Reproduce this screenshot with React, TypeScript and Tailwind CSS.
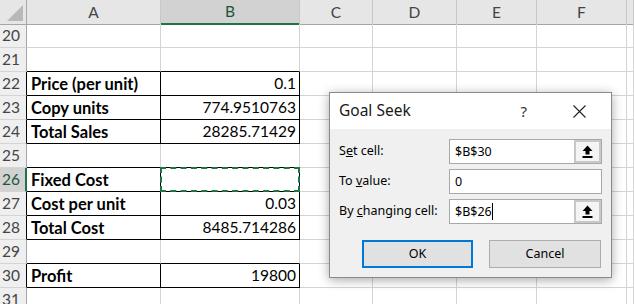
import React from "react"

type Row = { n: number; a?: string; b?: string; box?: boolean; above?: boolean; sel?: boolean }

const rows: Row[] = [
    { n: 20 },
    { n: 21, above: true },
    { n: 22, a: "Price (per unit)", b: "0.1", box: true },
    { n: 23, a: "Copy units", b: "774.9510763", box: true },
    { n: 24, a: "Total Sales", b: "28285.71429", box: true },
    { n: 25, above: true },
    { n: 26, a: "Fixed Cost", box: true, sel: true },
    { n: 27, a: "Cost per unit", b: "0.03", box: true },
    { n: 28, a: "Total Cost", b: "8485.714286", box: true },
    { n: 29, above: true },
    { n: 30, a: "Profit", b: "19800", box: true },
    { n: 31 },
]

const cols = ["C", "D", "E", "F", ""]

function RefButton() {
    return (
        <div className="w-[27px] h-full border-2 border-[#c8c8c8] bg-[#f4f4f4] flex items-center justify-center">
            <svg width="11" height="13" viewBox="0 0 11 13">
                <path d="M5.5 0.5 L10.5 6 L7.5 6 L7.5 9.5 L3.5 9.5 L3.5 6 L0.5 6 Z" fill="#000" />
                <rect x="0.5" y="11" width="10" height="2" fill="#000" />
            </svg>
        </div>
    )
}

function GoalSeek() {
    return (
        <div className="absolute left-[329px] top-[92px] w-[283px] h-[186px] bg-[#f0f0f0] border border-[#8a8a8a] shadow-[0_2px_10px_rgba(0,0,0,0.35)] font-['Noto_Sans',sans-serif] text-[#000]">
            {/* title bar */}
            <div className="h-[36px] bg-white flex items-center pl-[9px] pr-[16px]">
                <span className="text-[15.5px] text-[#1a1a1a]">Goal Seek</span>
                <span className="ml-auto text-[15px] text-[#333] mr-[46px]">?</span>
                <svg width="13" height="13" viewBox="0 0 13 13" className="mr-[9px]">
                    <path d="M0.5 0.5 L12.5 12.5 M12.5 0.5 L0.5 12.5" stroke="#222" strokeWidth="1.1" />
                </svg>
            </div>

            {/* fields */}
            <div className="pt-[10px] pl-[9px] pr-[9px] flex flex-col gap-[5px] text-[12.5px]">
                <div className="flex items-center h-[25px]">
                    <span className="w-[110px]">S<u>e</u>t cell:</span>
                    <div className="flex-1 h-full flex border border-[#a8a8a8] bg-white">
                        <span className="flex-1 pl-[5px] leading-[23px]">$B$30</span>
                        <RefButton />
                    </div>
                </div>
                <div className="flex items-center h-[25px]">
                    <span className="w-[110px]">To <u>v</u>alue:</span>
                    <div className="flex-1 h-full border border-[#a8a8a8] bg-white pl-[5px] leading-[23px]">0</div>
                </div>
                <div className="flex items-center h-[25px]">
                    <span className="w-[110px]">By <u>c</u>hanging cell:</span>
                    <div className="flex-1 h-full flex border border-[#a8a8a8] bg-white">
                        <span className="flex-1 pl-[5px] leading-[23px] flex items-center">
                            $B$26<span className="inline-block w-px h-[17px] bg-black"></span>
                        </span>
                        <RefButton />
                    </div>
                </div>
            </div>

            {/* buttons */}
            <div className="flex gap-[16px] pl-[32px] mt-[16px] text-[12.5px]">
                <button className="w-[111px] h-[28px] bg-[#e1e1e1] border-2 border-[#0078d7]">OK</button>
                <button className="w-[112px] h-[28px] bg-[#e1e1e1] border border-[#adadad]">Cancel</button>
            </div>
        </div>
    )
}

export default function App() {
    const grid = "grid grid-cols-[27px_134px_139px_73px_84px_80px_90px_1fr]"
    return (
        <div className="relative w-[634px] h-[304px] overflow-hidden bg-white font-['Lato',sans-serif] text-[15.5px] text-black">
            {/* column headers */}
            <div className={`${grid} h-[24px]`}>
                <div className="bg-[#e6e6e6] border-r border-b border-[#a6a6a6] relative">
                    <svg className="absolute right-[3px] bottom-[3px]" width="16" height="16" viewBox="0 0 16 16">
                        <polygon points="16,0 16,16 0,16" fill="#b8b8b8" />
                    </svg>
                </div>
                <div className="bg-[#e6e6e6] border-r border-b border-r-[#c8c8c8] border-b-[#a6a6a6] flex items-center justify-center text-[#444]">A</div>
                <div className="bg-[#d2d2d2] border-r border-r-[#c8c8c8] border-b-2 border-b-[#217346] flex items-center justify-center text-[#21553a]">B</div>
                {cols.map((c, i) => (
                    <div key={i} className="bg-[#e6e6e6] border-r border-b border-r-[#c8c8c8] border-b-[#a6a6a6] flex items-center justify-center text-[#444]">{c}</div>
                ))}
            </div>

            {/* rows */}
            {rows.map((r) => {
                const edge = r.box || r.above ? "border-b-black" : "border-b-[#d4d4d4]"
                return (
                    <div key={r.n} className={`${grid} h-[24px]`}>
                        <div className={`border-b border-b-[#d4d4d4] flex items-end pl-[2px] ${r.sel ? "bg-[#d2d2d2] text-[#21553a] border-r-2 border-r-[#217346]" : "bg-[#efefef] text-[#444] border-r " + (r.box ? "border-r-black" : "border-r-[#a6a6a6]")}`}>
                            {r.n}
                        </div>
                        <div className={`border-b ${edge} border-r ${r.box ? "border-r-black" : "border-r-[#d4d4d4]"} flex items-end pl-[4px] font-bold text-[16.5px] leading-[22px] whitespace-nowrap`}>
                            {r.a}
                        </div>
                        <div className={`relative border-b ${edge} border-r ${r.box ? "border-r-black" : "border-r-[#d4d4d4]"} flex items-end justify-end pr-[3px]`}>
                            {r.b}
                            {r.sel && (
                                <div className="absolute left-[-1px] top-[-1px] right-[-1px] bottom-[-1px] border-2 border-dashed border-[#217346]"></div>
                            )}
                        </div>
                        {cols.map((c, i) => (
                            <div key={i} className="border-r border-b border-[#d4d4d4]"></div>
                        ))}
                    </div>
                )
            })}

            <GoalSeek />
        </div>
    )
}
